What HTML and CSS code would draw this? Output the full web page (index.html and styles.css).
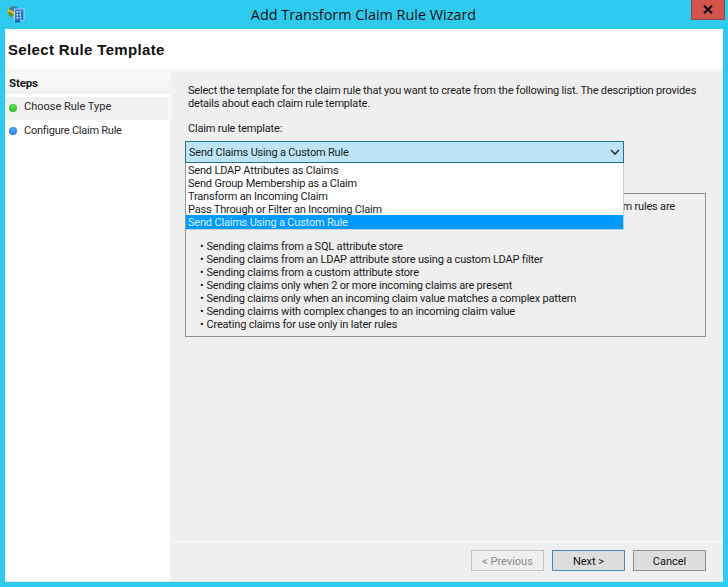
FILE: index.html
```html
<!DOCTYPE html>
<html lang="en">
<head>
<meta charset="utf-8">
<title>Add Transform Claim Rule Wizard</title>
<link rel="stylesheet" href="styles.css">
</head>
<body>
<div class="window">
  <div class="titlebar">
    <svg class="app-icon" width="18" height="18" viewBox="0 0 18 18">
      <circle cx="6" cy="6.5" r="5.5" fill="#e8b21e"/>
      <path d="M1.5 4 C3.5 0.5 8.5 0 11 3.5 L6.5 6.5 Z" fill="#2a86a8"/>
      <path d="M0.8 7.5 C2.5 6.5 5.5 7.5 6.5 10.5 L5 12 C2.8 11.6 1.2 9.8 0.8 7.5 Z" fill="#3d9a3d"/>
      <rect x="7.5" y="4" width="9.5" height="11.5" fill="#2f7fd0" stroke="#bcdcf5" stroke-width="0.8"/>
      <path d="M9.5 6h1.5v1.5h-1.5zM12.5 6h1.5v1.5h-1.5zM9.5 9h1.5v1.5h-1.5zM12.5 9h1.5v1.5h-1.5zM9.5 12h1.5v1.5h-1.5zM12.5 12h1.5v1.5h-1.5z" fill="#d8ecfb"/>
      <path d="M8 15h5v2.5H8z" fill="#1c62ad"/>
    </svg>
    <div class="title">Add Transform Claim Rule Wizard</div>
    <div class="close">
      <svg width="10" height="9" viewBox="0 0 10 9"><path d="M1 0.8 L9 8.2 M9 0.8 L1 8.2" stroke="#0c0c0c" stroke-width="2.2" fill="none"/></svg>
    </div>
  </div>
  <div class="client">
    <header class="page-head"><h1>Select Rule Template</h1></header>
    <div class="columns">
      <aside class="steps">
        <div class="steps-title">Steps</div>
        <div class="step current"><span class="dot green"></span>Choose Rule Type</div>
        <div class="step"><span class="dot blue"></span>Configure Claim Rule</div>
      </aside>
      <main class="content">
        <div class="form">
          <p class="intro">Select the template for the claim rule that you want to create from the following list. The description provides<br>details about each claim rule template.</p>
          <div class="label">Claim rule template:</div>
          <div class="combo-wrap">
            <div class="combo">
              <span>Send Claims Using a Custom Rule</span>
              <svg width="10" height="7" viewBox="0 0 10 7"><path d="M1 1 L5 5 L9 1" stroke="#333" stroke-width="1.7" fill="none"/></svg>
            </div>
            <ul class="dropdown">
              <li>Send LDAP Attributes as Claims</li>
              <li>Send Group Membership as a Claim</li>
              <li>Transform an Incoming Claim</li>
              <li>Pass Through or Filter an Incoming Claim</li>
              <li class="selected">Send Claims Using a Custom Rule</li>
            </ul>
          </div>
          <div class="description">
            <div class="desc-tail">m rules are</div>
            <ul class="desc-list">
              <li>Sending claims from a SQL attribute store</li>
              <li>Sending claims from an LDAP attribute store using a custom LDAP filter</li>
              <li>Sending claims from a custom attribute store</li>
              <li>Sending claims only when 2 or more incoming claims are present</li>
              <li>Sending claims only when an incoming claim value matches a complex pattern</li>
              <li>Sending claims with complex changes to an incoming claim value</li>
              <li>Creating claims for use only in later rules</li>
            </ul>
          </div>
        </div>
        <footer class="buttons">
          <button class="btn disabled">&lt; Previous</button>
          <button class="btn default">Next &gt;</button>
          <button class="btn">Cancel</button>
        </footer>
      </main>
    </div>
  </div>
</div>
</body>
</html>
```
FILE: styles.css
```css
* { box-sizing: border-box; }
html, body { margin: 0; height: 100%; }
body {
  font-family: Roboto, "Open Sans", "Liberation Sans", sans-serif;
  font-size: 11px;
  letter-spacing: -0.19px;
  color: #1a1a1a;
  overflow: hidden;
}
.window {
  width: 728px;
  height: 587px;
  background: #2fcbef;
  display: flex;
  flex-direction: column;
  padding: 0 5px 5px;
}
.titlebar {
  height: 29px;
  flex: none;
  display: flex;
  align-items: center;
  position: relative;
}
.app-icon { position: absolute; left: 2px; top: 5px; }
.title {
  flex: 1;
  text-align: center;
  font-family: "Open Sans", sans-serif;
  font-size: 14.4px;
  letter-spacing: 0;
  color: #111;
  padding-right: 1px;
  line-height: 29px;
}
.close {
  position: absolute;
  right: -2px;
  top: 0;
  width: 34px;
  height: 20px;
  background: #d2544c;
  border: 1px solid #8c4a48;
  border-top: 0;
  display: flex;
  align-items: center;
  justify-content: center;
}
.client {
  flex: 1;
  background: #fff;
  display: flex;
  flex-direction: column;
  border-bottom: 1px solid #dfe9ef;
  min-height: 0;
}
.page-head {
  height: 43px;
  flex: none;
  display: flex;
  align-items: center;
  padding: 1px 0 0 3px;
  border-bottom: 3px solid #f4f4f4;
}
h1 {
  margin: 0;
  font-family: "Liberation Sans", Arial, sans-serif;
  font-size: 15px;
  font-weight: 700;
  color: #111;
  letter-spacing: 0.35px;
}
.columns { flex: 1; display: flex; min-height: 0; }
.steps {
  width: 168px;
  flex: none;
  border-right: 3px solid #f2f2f2;
}
.steps-title {
  height: 22px;
  margin-bottom: 3px;
  padding: 4px 0 0 4px;
  font-weight: 700;
  font-size: 11.5px;
  letter-spacing: -0.15px;
  line-height: 14px;
  background: linear-gradient(#fafafa, #f1f1f1);
}
.step {
  height: 23px;
  display: flex;
  align-items: center;
  padding-bottom: 3px;
  letter-spacing: -0.25px;
  color: #2b2b2b;
  width: 164px;
}
.step.current { background: #f0f0f0; padding-bottom: 4px; letter-spacing: 0; }
.dot {
  width: 8px;
  height: 8px;
  border-radius: 50%;
  margin: 2px 7px 0 4px;
  flex: none;
}
.green { background: radial-gradient(circle at 50% 35%, #66e05e, #12b012); }
.blue { background: radial-gradient(circle at 50% 35%, #5aa8ff, #1070e8); }
.content {
  flex: 1;
  background: #efefef;
  display: flex;
  flex-direction: column;
  min-width: 0;
}
.form { flex: 1; padding: 12px 17px 0 12px; border-bottom: 2px solid #f9f9f9; }
.intro { margin: 0 0 0 3px; line-height: 13px; white-space: nowrap; }
.label { margin: 12px 0 0 3px; line-height: 14px; }
.combo-wrap { position: relative; width: 439px; margin-top: 5px; }
.combo {
  height: 22px;
  background: #bde5f7;
  border: 1px solid #2a6f93;
  display: flex;
  align-items: center;
  justify-content: space-between;
  padding: 0 3px 0 3px;
}
.dropdown {
  position: absolute;
  left: 0;
  top: 22px;
  width: 439px;
  margin: 0;
  padding: 0;
  list-style: none;
  background: #fff;
  border: 1px solid #bcd0dc;
  border-top: 0;
  border-left-color: #8a9aa4;
  z-index: 2;
}
.dropdown li { height: 13px; line-height: 15px; padding-left: 2px; }
.dropdown .selected { background: #0099ff; color: #d8f0ff; height: 14px; }
.description {
  width: 521px;
  height: 144px;
  margin-top: 30px;
  border: 1px solid #8d8d8d;
  position: relative;
}
.desc-tail { position: absolute; right: 30px; top: 6px; line-height: 13px; }
.desc-list { list-style: none; margin: 0; padding: 46px 0 0 14px; }
.desc-list li { line-height: 13px; }
.desc-list li::before { content: "•"; margin-right: 3px; }
.buttons {
  height: 38px;
  flex: none;
  display: flex;
  justify-content: flex-end;
  padding: 7px 17px 0 0;
  gap: 8px;
}
.btn {
  width: 73px;
  height: 21px;
  font: inherit;
  letter-spacing: 0;
  color: #111;
  background: #dddddd;
  border: 1px solid #8f8f8f;
  padding: 1px 0 0;
  border-radius: 0;
}
.btn.default { border-color: #3e8fc0; }
.btn.disabled { background: #efefef; border-color: #c4c4c4; color: #8a8a8a; }
```
